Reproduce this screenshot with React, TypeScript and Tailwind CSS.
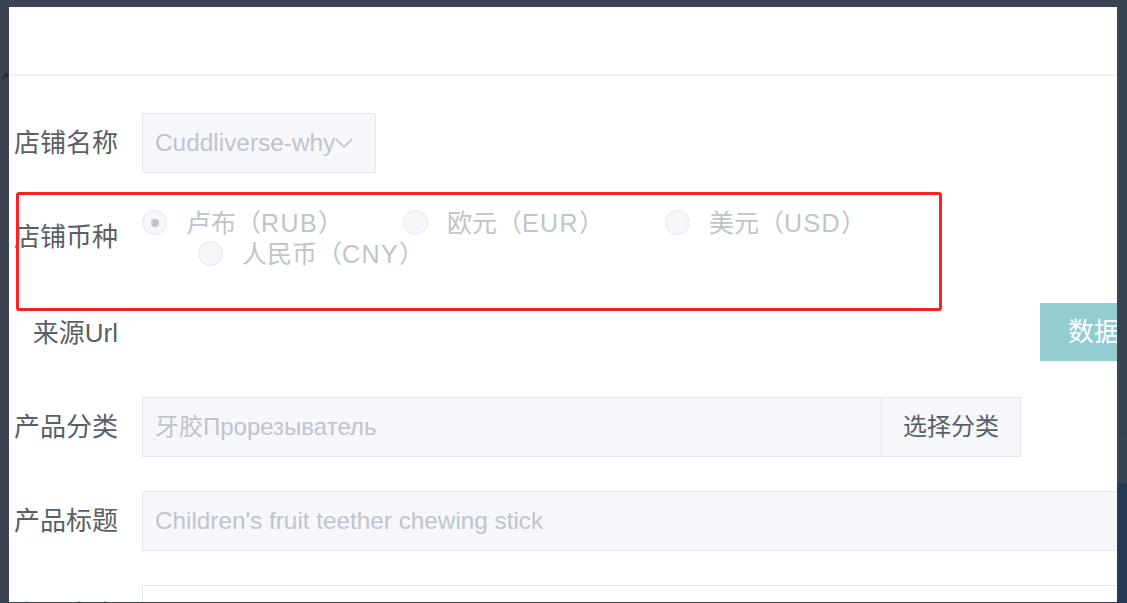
import React from 'react';

const font = { fontFamily: '"Liberation Sans", "Noto Sans CJK SC", sans-serif' };

function Label({ text }: { text: string }) {
  return (
    <div className="w-[133px] shrink-0 pr-[24px] text-right text-[26px] leading-[60px] text-[#5a5e66] whitespace-nowrap">
      {text}
    </div>
  );
}

// full-width paren, kept 1em wide like the reference font
function Paren({ ch }: { ch: string }) {
  return <span className="inline-block w-[25px] font-['Noto_Sans_CJK_SC']">{ch}</span>;
}

function Radio({ cn, code, checked, width }: { cn: string; code: string; checked?: boolean; width?: string }) {
  return (
    <div className={`flex items-center h-[31px] whitespace-nowrap ${width ?? ''}`}>
      <span className="w-[25px] h-[25px] shrink-0 rounded-full border border-[#e4e7ed] bg-[#f5f7fa] flex items-center justify-center">
        {checked && <span className="w-[8px] h-[8px] rounded-full bg-[#c0c4cc]" />}
      </span>
      <span className="ml-[19px] text-[25px] leading-[31px] text-[#c0c4cc]">
        {cn}
        <Paren ch="（" />
        <span className="tracking-[1.4px]">{code}</span>
        <Paren ch="）" />
      </span>
    </div>
  );
}

export default function App() {
  return (
    <div className="w-[1127px] h-[603px] bg-[#3a4352] flex overflow-hidden relative" style={font}>
      {/* left strip */}
      <div className="w-[9px] shrink-0 pt-[72px]">
        <svg width="8" height="8" viewBox="0 0 8 8" className="ml-[1px]">
          <path d="M1 7 L6 2 M3 2 H6 V5" stroke="#1e2633" strokeWidth="1.5" fill="none" />
        </svg>
      </div>

      {/* dialog panel */}
      <div className="mt-[7px] w-[1108px] h-[595px] shrink-0 bg-white flex flex-col overflow-hidden">
        <div className="h-[69px] shrink-0 border-b-2 border-[#f0f0f5]" />

        <div className="pt-[37px] flex flex-col gap-[34px] w-[1300px]">
          {/* 店铺名称 */}
          <div className="flex h-[60px]">
            <Label text="店铺名称" />
            <div className="w-[234px] h-[60px] border border-[#e4e7ed] bg-[#f5f7fa] flex items-center pl-[12px] pr-[22px]">
              <span className="text-[24.4px] text-[#c0c4cc] whitespace-nowrap">Cuddliverse-why</span>
              <svg width="18" height="10" viewBox="0 0 18 10" className="shrink-0">
                <path d="M1 1 L9 9 L17 1" stroke="#c0c4cc" strokeWidth="1.6" fill="none" />
              </svg>
            </div>
          </div>

          {/* 店铺币种 */}
          <div className="flex h-[62px]">
            <Label text="店铺币种" />
            <div className="flex flex-col">
              <div className="flex">
                <Radio cn="卢布" code="RUB" checked width="w-[261px]" />
                <Radio cn="欧元" code="EUR" width="w-[262px]" />
                <Radio cn="美元" code="USD" />
              </div>
              <div className="flex pl-[56px]">
                <Radio cn="人民币" code="CNY" />
              </div>
            </div>
          </div>

          {/* 来源Url */}
          <div className="flex h-[60px]">
            <Label text="来源Url" />
            <div className="w-[898px]" />
            <button className="h-[58px] bg-[#93cdd1] text-white text-[26px] pl-[28px] pr-[28px] whitespace-nowrap">
              数据采集
            </button>
          </div>

          {/* 产品分类 */}
          <div className="flex h-[60px]">
            <Label text="产品分类" />
            <div className="flex h-[60px] border border-[#e4e7ed] bg-[#f5f7fa]">
              <div className="w-[738px] flex items-center pl-[12px] text-[24px] text-[#c0c4cc] whitespace-nowrap">
                牙胶Прорезыватель
              </div>
              <div className="w-[139px] border-l border-[#e4e7ed] flex items-center justify-center text-[24px] text-[#5a5e66]">
                选择分类
              </div>
            </div>
          </div>

          {/* 产品标题 */}
          <div className="flex h-[60px]">
            <Label text="产品标题" />
            <div className="w-[1100px] h-[60px] border border-[#e4e7ed] bg-[#f5f7fa] flex items-center pl-[12px] text-[24.3px] text-[#c0c4cc] whitespace-nowrap">
              Children's fruit teether chewing stick
            </div>
          </div>

          {/* next row, cut off */}
          <div className="flex h-[60px]">
            <Label text="产品卖点" />
            <div className="w-[1100px] h-[60px] border border-[#e4e7ed] bg-white" />
          </div>
        </div>
      </div>

      {/* right strip */}
      <div className="w-[10px] shrink-0 flex flex-col">
        <div className="h-[25px]" />
        <div className="h-[458px] flex flex-col">
          <div className="h-[375px]" />
          <div className="h-[1px] bg-[#33404f]" />
          <div className="h-[32px]" />
          <div className="h-[1px] bg-[#33404f]" />
        </div>
        <div className="flex-1 bg-[#243a55]" />
      </div>

      {/* annotation box */}
      <div className="absolute left-[16px] top-[192px] w-[926px] h-[119px] border-[3px] border-[#ff2121] rounded-[3px] pointer-events-none" />
    </div>
  );
}
